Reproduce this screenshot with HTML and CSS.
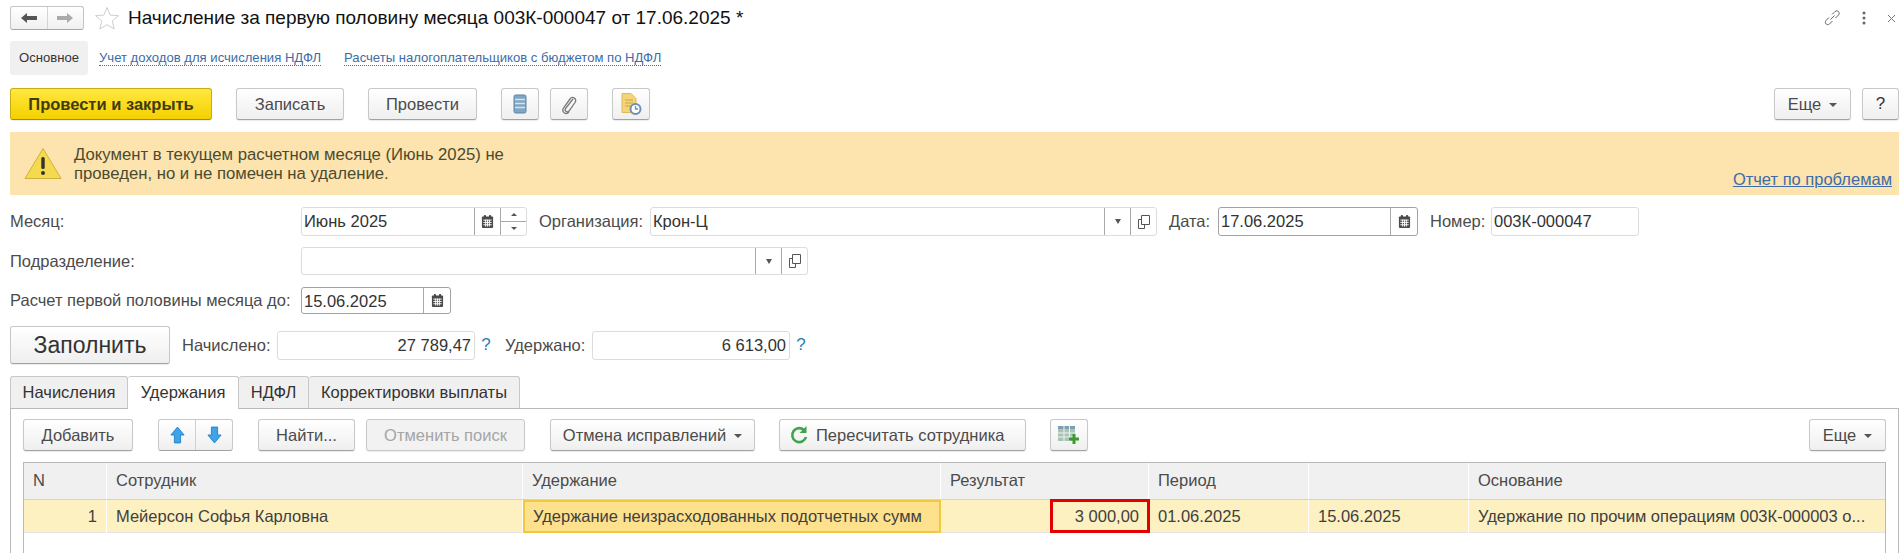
FILE: index.html
```html
<!DOCTYPE html>
<html lang="ru">
<head>
    <meta charset="UTF-8">
    <title>Начисление за первую половину месяца</title>
    <link rel="stylesheet" href="styles.css">
</head>
<body>
<svg class="defs" width="0" height="0">
    <symbol id="calendar" viewBox="0 0 14 16">
        <path d="M1 3.500q0-1 1-1h10q1 0 1 1V14q0 1-1 1H2q-1 0-1-1z" fill="#4a4a4a"/>
        <rect x="3" y="1" width="2.400" height="3.500" rx="1" fill="#4a4a4a"/>
        <rect x="8.600" y="1" width="2.400" height="3.500" rx="1" fill="#4a4a4a"/>
        <path d="M2.500 6.500h9M2.500 9h9M2.500 11.500h9M5 6v7.500M7 6v7.500M9 6v7.500" stroke="#fff" stroke-width="1"/>
    </symbol>
    <symbol id="copy" viewBox="0 0 14 16">
        <path d="M4.500 1.500h8v9h-8zM4.500 5.500h-3v9h6v-4" fill="none" stroke="#555" stroke-width="1"/>
    </symbol>
</svg>

<div class="page">
    <header class="title-row">
        <div class="nav-group">
            <span class="nav-btn nav-back">
                <svg width="18" height="12" viewBox="0 0 18 12"><path d="M1 6l6-5v3h10v4H7v3z" fill="#555"/></svg>
            </span>
            <span class="nav-btn">
                <svg width="18" height="12" viewBox="0 0 18 12"><path d="M17 6l-6-5v3H1v4h10v3z" fill="#aaa"/></svg>
            </span>
        </div>
        <svg class="star" width="26" height="24" viewBox="0 0 26 24"><path d="M13 1.500l3.200 7.600 8.300.6-6.300 5.300 2 8-7.200-4.300-7.200 4.300 2-8-6.300-5.300 8.300-.6z" fill="#fff" stroke="#cfcfcf"/></svg>
        <h1 class="doc-title">Начисление за первую половину месяца 003К-000047 от 17.06.2025 *</h1>
        <div class="window-tools">
            <svg width="18" height="18" viewBox="0 0 18 18"><path d="M7.500 10.500l4-4M6 8.500l-3 3c-2 2.500 1 5.500 3.500 3.500l3-3M9 5.500l3-3c2.500-2 5.500 1 3.500 3.500l-3 3" fill="none" stroke="#666" stroke-width="1"/></svg>
            <svg width="4" height="14" viewBox="0 0 4 14"><circle cx="2" cy="2" r="1.500" fill="#666"/><circle cx="2" cy="7" r="1.500" fill="#666"/><circle cx="2" cy="12" r="1.500" fill="#666"/></svg>
            <svg width="9" height="9" viewBox="0 0 9 9"><path d="M1 1l7 7M8 1L1 8" stroke="#777" stroke-width="1"/></svg>
        </div>
    </header>

    <nav class="section-tabs">
        <span class="section-current">Основное</span>
        <a class="section-link" href="#">Учет доходов для исчисления НДФЛ</a>
        <a class="section-link" href="#">Расчеты налогоплательщиков с бюджетом по НДФЛ</a>
    </nav>

    <div class="command-bar">
        <button class="btn btn-primary">Провести и закрыть</button>
        <button class="btn btn-save">Записать</button>
        <button class="btn btn-post">Провести</button>
        <button class="btn btn-icon">
            <svg width="14" height="20" viewBox="0 0 14 20"><rect x="1" y="1" width="12" height="18" rx="1.500" fill="#7fa6c4" stroke="#5f87a6"/><path d="M2 5.500h10M2 9.500h10M2 13.500h10" stroke="#d5e3ee" stroke-width="1.500"/></svg>
        </button>
        <button class="btn btn-icon btn-clip">
            <svg width="18" height="22" viewBox="0 0 18 22"><path d="M13 6l-7.500 9.500c-1.500 2.500 2 4.500 3.500 2.500l6-8.500c2.500-3.500-2.500-7-5-3.500l-6.500 9c-2.500 4 2.500 7.500 5.500 4" fill="none" stroke="#777" stroke-width="1.300"/></svg>
        </button>
        <button class="btn btn-icon btn-report">
            <svg width="22" height="24" viewBox="0 0 22 24"><path d="M2 1.500h9l5 5v14H2z" fill="#f4d477" stroke="#dcb95a"/><path d="M5 8h8M5 11h8M5 14h5" stroke="#c9a64c"/><circle cx="15.500" cy="17" r="5" fill="#fff" stroke="#6d8fb5" stroke-width="2"/><path d="M15.500 14v3h2.500" fill="none" stroke="#6d8fb5" stroke-width="1.300"/></svg>
        </button>
        <button class="btn btn-more">Еще<span class="caret"></span></button>
        <button class="btn btn-help">?</button>
    </div>

    <div class="warning">
        <svg class="warning-icon" width="38" height="33" viewBox="0 0 38 33"><path d="M19 1.500L37 31.500H1z" fill="#f5d94e" stroke="#cdb33a"/><rect x="17.300" y="10" width="3.400" height="12" rx="1.500" fill="#333"/><circle cx="19" cy="26" r="2" fill="#333"/></svg>
        <p class="warning-text">Документ в текущем расчетном месяце (Июнь 2025) не<br>проведен, но и не помечен на удаление.</p>
        <a class="warning-link" href="#">Отчет по проблемам</a>
    </div>

    <div class="form-row row-month">
        <label class="label label-wide">Месяц:</label>
        <div class="field field-month">
            <span class="field-value">Июнь 2025</span>
            <span class="field-btn"><svg width="13" height="15"><use href="#calendar"/></svg></span>
            <span class="field-spin"><i class="spin-up"></i><i class="spin-down"></i></span>
        </div>
        <label class="label label-org">Организация:</label>
        <div class="field field-org">
            <span class="field-value">Крон-Ц</span>
            <span class="field-btn"><i class="drop"></i></span>
            <span class="field-btn"><svg width="14" height="16"><use href="#copy"/></svg></span>
        </div>
        <label class="label label-date">Дата:</label>
        <div class="field field-date field-focus">
            <span class="field-value">17.06.2025</span>
            <span class="field-btn"><svg width="13" height="15"><use href="#calendar"/></svg></span>
        </div>
        <label class="label label-number">Номер:</label>
        <div class="field field-number">
            <span class="field-value">003К-000047</span>
        </div>
    </div>

    <div class="form-row row-dept">
        <label class="label label-wide">Подразделение:</label>
        <div class="field field-dept">
            <span class="field-value"></span>
            <span class="field-btn"><i class="drop"></i></span>
            <span class="field-btn"><svg width="14" height="16"><use href="#copy"/></svg></span>
        </div>
    </div>

    <div class="form-row row-until">
        <label class="label label-wide">Расчет первой половины месяца до:</label>
        <div class="field field-until field-focus">
            <span class="field-value">15.06.2025</span>
            <span class="field-btn"><svg width="13" height="15"><use href="#calendar"/></svg></span>
        </div>
    </div>

    <div class="form-row row-totals">
        <button class="btn btn-fill">Заполнить</button>
        <label class="label label-accrued">Начислено:</label>
        <div class="field field-sum"><span class="field-value num">27 789,47</span></div>
        <span class="hint">?</span>
        <label class="label label-withheld">Удержано:</label>
        <div class="field field-sum"><span class="field-value num">6 613,00</span></div>
        <span class="hint">?</span>
    </div>

    <div class="tabs">
        <span class="tab tab-1">Начисления</span>
        <span class="tab tab-2 active">Удержания</span>
        <span class="tab tab-3">НДФЛ</span>
        <span class="tab tab-4">Корректировки выплаты</span>
    </div>

    <section class="panel">
        <div class="toolbar">
            <button class="btn btn-add">Добавить</button>
            <div class="arrows">
                <span class="arrow-btn">
                    <svg width="15" height="18" viewBox="0 0 17 20"><path d="M8.500 1L16 10h-4v9H5v-9H1z" fill="#3ea3e8" stroke="#1f7fc4"/></svg>
                </span>
                <span class="arrow-btn">
                    <svg width="15" height="18" viewBox="0 0 17 20"><path d="M8.500 19L16 10h-4V1H5v9H1z" fill="#3ea3e8" stroke="#1f7fc4"/></svg>
                </span>
            </div>
            <button class="btn btn-find">Найти...</button>
            <button class="btn btn-cancel" disabled>Отменить поиск</button>
            <button class="btn btn-undo">Отмена исправлений<span class="caret"></span></button>
            <button class="btn btn-recalc">
                <svg width="20" height="20" viewBox="0 0 20 20"><path d="M15.500 5.500A7 7 0 1 0 17 12" fill="none" stroke="#3fa34d" stroke-width="2.600"/><path d="M17.500 1v7h-7z" fill="#3fa34d"/></svg>
                Пересчитать сотрудника
            </button>
            <button class="btn btn-icon btn-table">
                <svg width="24" height="22" viewBox="0 0 24 22"><rect x="1" y="2" width="17" height="15" fill="#a9c3b4"/><rect x="1" y="2" width="17" height="3" fill="#7f9fb0"/><path d="M7 2v15M12.500 2v15M1 9h17M1 13h17" stroke="#eef3ef"/><path d="M17 10v10M12 15h10" stroke="#3f9a2f" stroke-width="3"/></svg>
            </button>
            <button class="btn btn-more btn-more-table">Еще<span class="caret"></span></button>
        </div>

        <div class="table">
            <div class="row head">
                <div class="cell">N</div>
                <div class="cell">Сотрудник</div>
                <div class="cell">Удержание</div>
                <div class="cell">Результат</div>
                <div class="cell">Период</div>
                <div class="cell"></div>
                <div class="cell">Основание</div>
            </div>
            <div class="row body">
                <div class="cell cell-num">1</div>
                <div class="cell">Мейерсон Софья Карловна</div>
                <div class="cell cell-current">Удержание неизрасходованных подотчетных сумм</div>
                <div class="cell cell-result"><span class="marked">3 000,00</span></div>
                <div class="cell">01.06.2025</div>
                <div class="cell">15.06.2025</div>
                <div class="cell">Удержание по прочим операциям 003К-000003 о...</div>
            </div>
        </div>
    </section>
</div>
</body>
</html>
```
FILE: styles.css
```css
html, body {
    margin: 0;
    height: 553px;
    overflow: hidden;
    background: #fff;
}

body {
    font-family: "Liberation Sans", Arial, sans-serif;
    font-size: 16.5px;
    color: #4b4b4b;
}

.defs {
    display: block;
    height: 0;
}

.page {
    padding: 6px 2px 0 10px;
}

/* title */
.title-row {
    display: flex;
    align-items: center;
    height: 24px;
}

.nav-group {
    display: flex;
    width: 74px;
    height: 24px;
    box-sizing: border-box;
    border: 1px solid #c4c4c4;
    border-bottom-color: #a6a6a6;
    border-radius: 3px;
    background: linear-gradient(#fff, #f0f0f0);
}

.nav-btn {
    flex: 1;
    display: flex;
    align-items: center;
    justify-content: center;
}

.nav-back {
    border-right: 1px solid #d4d4d4;
}

.star {
    margin-left: 10px;
}

.doc-title {
    margin: 0 0 0 8px;
    font-size: 19px;
    font-weight: normal;
    color: #111;
    white-space: nowrap;
}

.window-tools {
    margin-left: auto;
    display: flex;
    align-items: center;
    gap: 21px;
    padding-right: 3px;
}

/* sections */
.section-tabs {
    display: flex;
    align-items: center;
    height: 34px;
    margin-top: 11px;
    font-size: 13.1px;
}

.section-current {
    width: 78px;
    height: 34px;
    line-height: 34px;
    text-align: center;
    background: #f0f0f0;
    border-radius: 3px;
    color: #333;
}

.section-link {
    color: #3d6ca8;
    text-decoration: none;
    border-bottom: 1px dotted #3d6ca8;
    margin-left: 11px;
}

.section-link + .section-link {
    margin-left: 23px;
}

/* buttons */
.btn {
    display: inline-flex;
    align-items: center;
    justify-content: center;
    box-sizing: border-box;
    height: 32px;
    padding: 0;
    font-family: inherit;
    font-size: 16.5px;
    color: #4b4b4b;
    border: 1px solid #c8c8c8;
    border-bottom-color: #a2a2a2;
    border-radius: 3px;
    background: linear-gradient(#fff, #efefef);
    box-shadow: 0 1px 1px rgba(0, 0, 0, 0.08);
}

.btn:disabled {
    color: #a5a5a5;
    background: #f2f2f2;
    border-bottom-color: #c8c8c8;
}

.caret {
    display: inline-block;
    margin-left: 8px;
    margin-top: 2px;
    border-left: 4px solid transparent;
    border-right: 4px solid transparent;
    border-top: 4px solid #555;
}

.command-bar {
    display: flex;
    margin-top: 13px;
}

.btn-primary {
    width: 202px;
    font-weight: bold;
    color: #403c10;
    background: linear-gradient(#ffe83f, #f5d000);
    border-color: #c9ac10;
    border-bottom-color: #a98f00;
}

.btn-save {
    width: 108px;
    margin-left: 24px;
}

.btn-post {
    width: 109px;
    margin-left: 24px;
}

.btn-icon {
    width: 38px;
    margin-left: 24px;
}

.btn-clip {
    margin-left: 11px;
}

.btn-report {
    margin-left: 24px;
}

.btn-more {
    width: 77px;
    margin-left: auto;
}

.btn-help {
    width: 37px;
    margin-left: 11px;
    font-size: 17px;
    color: #333;
}

/* warning */
.warning {
    display: flex;
    align-items: center;
    height: 63px;
    margin-top: 12px;
    background: #fde3ae;
}

.warning-icon {
    margin-left: 14px;
}

.warning-text {
    margin: 0 0 0 12px;
    font-size: 16.7px;
    line-height: 19px;
    color: #4b4b2f;
}

.warning-link {
    margin-left: auto;
    margin-right: 7px;
    align-self: flex-end;
    margin-bottom: 6px;
    color: #3d6ca8;
    text-decoration: underline;
}

/* form */
.form-row {
    display: flex;
    align-items: center;
}

.row-month {
    margin-top: 12px;
}

.row-dept {
    margin-top: 11px;
}

.row-until {
    margin-top: 12px;
}

.row-totals {
    margin-top: 12px;
}

.label {
    white-space: nowrap;
}

.label-wide {
    width: 291px;
}

.label-org {
    margin-left: 12px;
    width: 111px;
}

.label-date {
    margin-left: 12px;
    width: 49px;
}

.label-number {
    margin-left: 12px;
    width: 61px;
}

.label-accrued {
    margin-left: 12px;
    width: 95px;
}

.label-withheld {
    margin-left: 8px;
    width: 87px;
}

.field {
    display: flex;
    box-sizing: border-box;
    height: 29px;
    border: 1px solid #dcdcdc;
    border-radius: 3px;
    background: #fff;
}

.field-focus {
    border-color: #a2a2a2;
}

.field-value {
    flex: 1;
    min-width: 0;
    padding: 0 3px 0 2px;
    line-height: 26px;
    color: #333;
    white-space: nowrap;
}

.num {
    text-align: right;
}

.field-btn {
    display: flex;
    align-items: center;
    justify-content: center;
    width: 26px;
    border-left: 1px solid #a9a9a9;
    box-sizing: border-box;
}

.field-focus .field-btn {
    width: 27px;
}

.drop {
    border-left: 3px solid transparent;
    border-right: 3px solid transparent;
    border-top: 5px solid #555;
}

.field-spin {
    width: 26px;
    display: flex;
    flex-direction: column;
    border-left: 1px solid #a9a9a9;
    box-sizing: border-box;
}

.field-spin i {
    flex: 1;
    display: flex;
    align-items: center;
    justify-content: center;
}

.spin-up {
    border-bottom: 1px solid #a9a9a9;
}

.spin-up::before,
.spin-down::before {
    content: "";
    border-left: 3px solid transparent;
    border-right: 3px solid transparent;
}

.spin-up::before {
    border-bottom: 3px solid #555;
}

.spin-down::before {
    border-top: 3px solid #555;
}

.field-month {
    width: 226px;
}

.field-org {
    width: 507px;
}

.field-date {
    width: 200px;
}

.field-number {
    width: 148px;
}

.field-dept {
    width: 507px;
    height: 28px;
}

.field-until {
    width: 150px;
    height: 27px;
}

.field-sum {
    width: 198px;
}

.btn-fill {
    width: 160px;
    height: 38px;
    font-size: 23px;
    color: #333;
}

.hint {
    width: 22px;
    text-align: center;
    font-size: 17px;
    color: #1f7fb8;
}

/* tabs */
.tabs {
    display: flex;
    margin-top: 12px;
    height: 32px;
}

.tab {
    box-sizing: border-box;
    height: 32px;
    line-height: 30px;
    text-align: center;
    color: #333;
    background: #f0f0f0;
    border: 1px solid #c8c8c8;
    border-bottom: 0;
    border-left: 0;
    border-radius: 3px 3px 0 0;
}

.tab-1 {
    width: 118px;
    border-left: 1px solid #c8c8c8;
}

.tab-2 {
    width: 111px;
}

.tab-3 {
    width: 70px;
}

.tab-4 {
    width: 211px;
}

.tab.active {
    height: 33px;
    background: #fff;
    position: relative;
    z-index: 1;
}

.panel {
    box-sizing: border-box;
    height: 150px;
    padding: 10px 12px 0;
    border: 1px solid #b9b9b9;
    border-bottom: 0;
}

.toolbar {
    display: flex;
}

.btn-add {
    width: 110px;
}

.arrows {
    display: flex;
    box-sizing: border-box;
    width: 75px;
    height: 32px;
    margin-left: 25px;
    border: 1px solid #c8c8c8;
    border-bottom-color: #a2a2a2;
    border-radius: 3px;
    background: linear-gradient(#fff, #efefef);
}

.arrow-btn {
    flex: 1;
    display: flex;
    align-items: center;
    justify-content: center;
}

.arrow-btn:first-child {
    border-right: 1px solid #d0d0d0;
}

.btn-find {
    width: 97px;
    margin-left: 25px;
}

.btn-cancel {
    width: 159px;
    margin-left: 11px;
}

.btn-undo {
    width: 205px;
    margin-left: 25px;
}

.btn-recalc {
    width: 247px;
    margin-left: 24px;
    padding-left: 9px;
    gap: 7px;
    justify-content: flex-start;
}

.btn-table {
    margin-left: 24px;
}

.btn-more-table {
    margin-left: auto;
}

/* table */
.table {
    margin-top: 11px;
    height: 100px;
    border: 1px solid #b9b9b9;
    border-bottom: 0;
}

.row {
    display: grid;
    grid-template-columns: 83px 416px 418px 208px 160px 160px 1fr;
}

.row.head {
    height: 36px;
    background: #f0f0f0;
    border-bottom: 1px solid #d4d4d4;
}

.row.body {
    height: 32px;
    background: #fdf1c2;
    border-bottom: 1px solid #e4e4e4;
}

.cell {
    box-sizing: border-box;
    padding: 0 9px;
    line-height: 32px;
    white-space: nowrap;
    overflow: hidden;
    border-right: 1px solid #fff;
    color: #3f3f3f;
}

.head .cell {
    line-height: 35px;
    color: #4b4b4b;
}

.cell:last-child {
    border-right: 0;
}

.cell-num {
    text-align: right;
}

.cell-current {
    background: #fde18c;
    border: 2px solid #f0c93e;
    padding: 0 7px 0 8px;
    line-height: 28px;
}

.cell-result {
    display: flex;
    justify-content: flex-end;
    padding: 0;
    overflow: visible;
    border-right: 0;
}

.marked {
    box-sizing: border-box;
    width: 100px;
    height: 34px;
    margin: -1px -1px 0 0;
    padding-right: 8px;
    line-height: 28px;
    text-align: right;
    border: 3px solid #e30000;
    position: relative;
}
```
